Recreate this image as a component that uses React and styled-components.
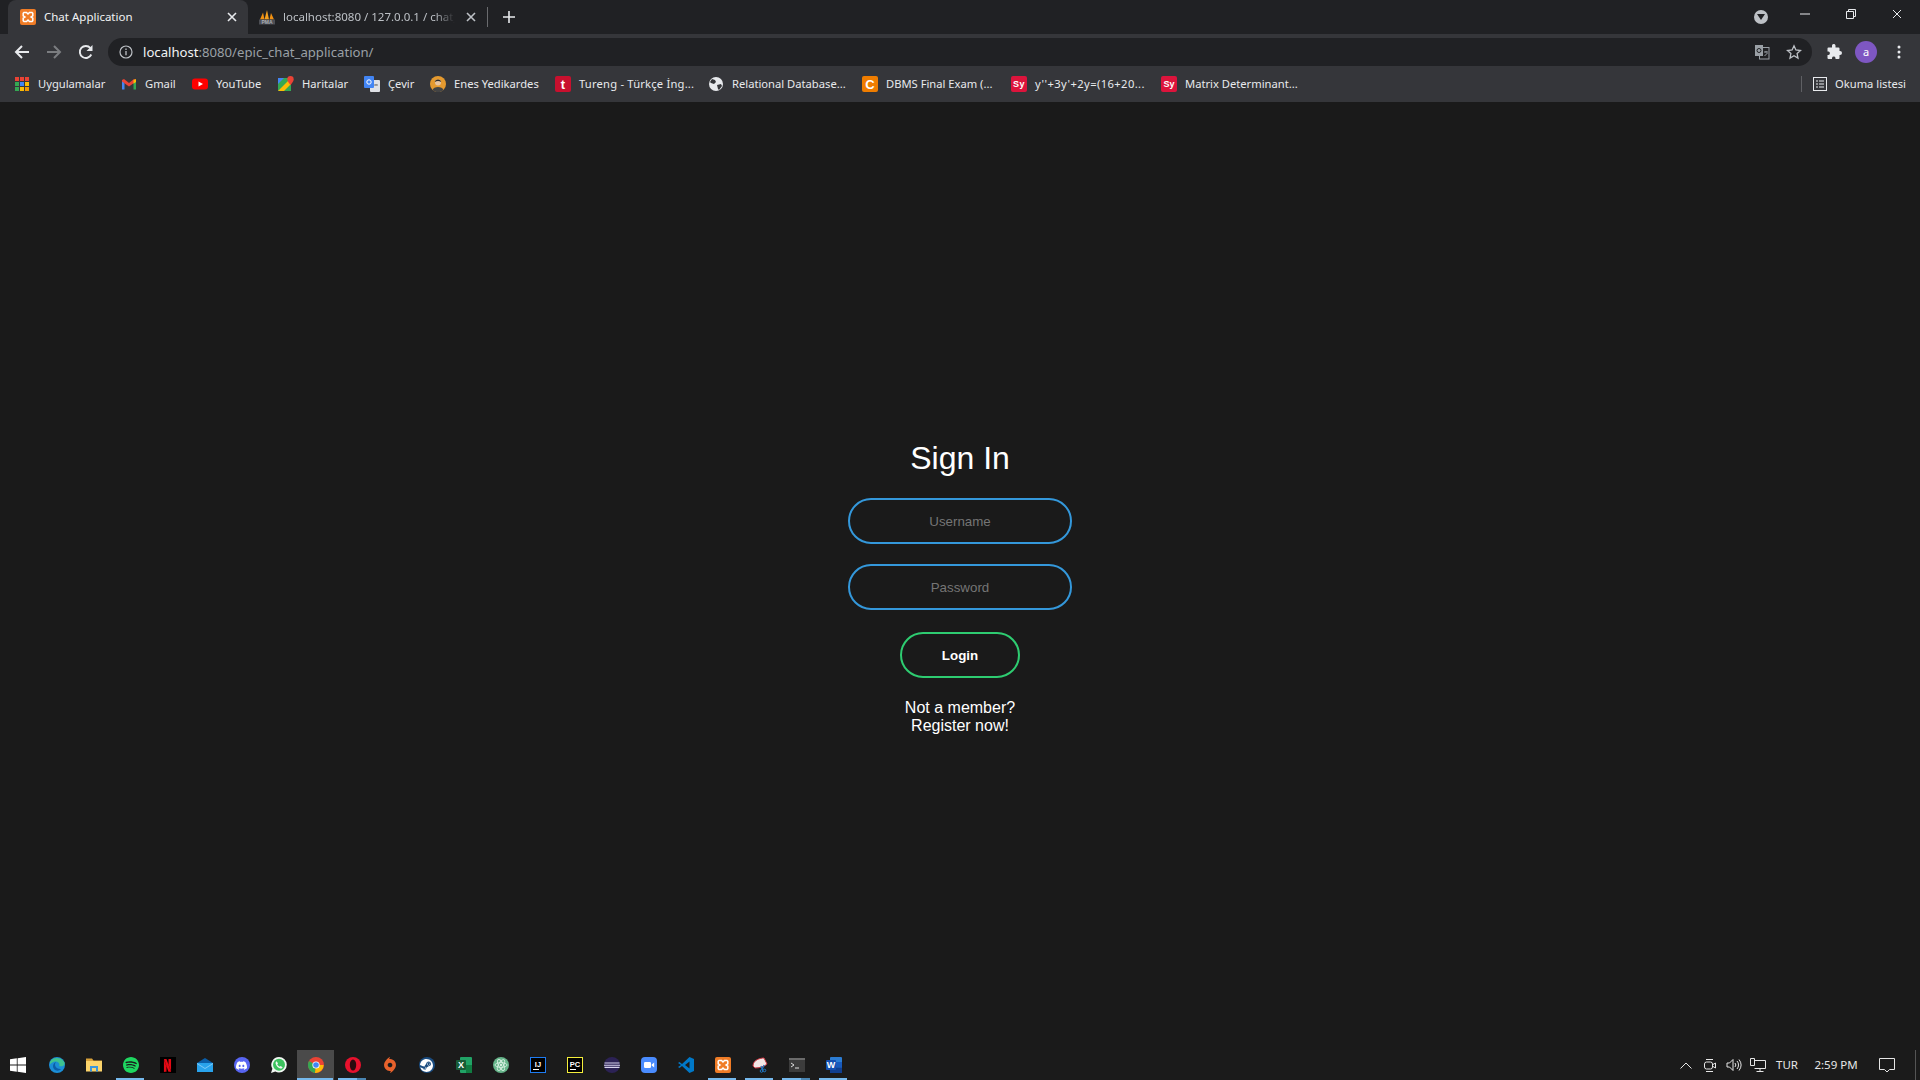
import React from "react";
import styled, { createGlobalStyle } from "styled-components";
import { SiSpotify, SiNetflix, SiDiscord, SiOrigin, SiSteam } from "react-icons/si";

const GlobalStyle = createGlobalStyle`
  html, body {
    margin: 0;
    height: 100%;
    overflow: hidden;
    background: #1a1a1a;
  }
  #root {
    height: 100%;
  }
  * {
    box-sizing: border-box;
  }
`;

const uiFont = `"Noto Sans", "Open Sans", sans-serif`;
const pageFont = `"Liberation Sans", Arial, sans-serif`;

const Screen = styled.div`
  height: 1080px;
  display: flex;
  flex-direction: column;
  font-family: ${uiFont};
`;

/* browser chrome */

const TabStrip = styled.div`
  height: 34px;
  flex: none;
  display: flex;
  align-items: stretch;
  padding-left: 8px;
  background: #202124;
`;

const Tab = styled.div`
  width: 240px;
  margin-right: -1px;
  display: flex;
  align-items: center;
  gap: 8px;
  padding: 0 8px 0 12px;
  border-radius: 8px 8px 0 0;
  color: ${(p) => (p.$active ? "#f1f3f4" : "#bdc1c6")};
  background: ${(p) => (p.$active ? "#35363a" : "transparent")};
`;

const TabTitle = styled.span`
  flex: 1;
  min-width: 0;
  padding-bottom: 2px;
  white-space: nowrap;
  overflow: hidden;
  font-size: 11.5px;
  mask-image: ${(p) => (p.$fade ? "linear-gradient(90deg, #000 88%, transparent)" : "none")};
`;

const TabClose = styled.div`
  width: 16px;
  height: 16px;
  flex: none;
  display: flex;
  align-items: center;
  justify-content: center;
`;

const TabDivider = styled.div`
  width: 1px;
  height: 20px;
  margin: 7px 0 0 1px;
  background: #6a6b6e;
`;

const NewTab = styled.div`
  width: 28px;
  margin-left: 7px;
  display: flex;
  align-items: center;
  justify-content: center;
`;

const WindowArea = styled.div`
  margin-left: auto;
  display: flex;
  align-items: flex-start;
`;

const ProfileDrop = styled.div`
  width: 14px;
  height: 14px;
  margin: 10px 14px 0 0;
  border-radius: 50%;
  background: #bdc1c6;
  display: flex;
  align-items: center;
  justify-content: center;
`;

const WindowButton = styled.div`
  width: 46px;
  height: 28px;
  display: flex;
  align-items: center;
  justify-content: center;
`;

const Toolbar = styled.div`
  height: 34px;
  flex: none;
  display: flex;
  align-items: center;
  padding: 2px 5px 0 6px;
  background: #35363a;
`;

const NavButton = styled.div`
  width: 32px;
  height: 32px;
  flex: none;
  display: flex;
  align-items: center;
  justify-content: center;
  margin-right: ${(p) => p.$mr || 0}px;
`;

const Omnibox = styled.div`
  flex: 1;
  height: 28px;
  margin: 0 6px;
  padding: 0 10px 0 11px;
  display: flex;
  align-items: center;
  border-radius: 14px;
  background: #202124;
`;

const UrlText = styled.div`
  margin-left: 10px;
  padding-bottom: 1px;
  font-size: 13.15px;
  color: #9aa0a6;
  b {
    font-weight: 400;
    color: #f1f3f4;
  }
`;

const OmniActions = styled.div`
  margin-left: auto;
  display: flex;
  align-items: center;
  gap: 16px;
`;

const Avatar = styled.div`
  width: 22px;
  height: 22px;
  padding-bottom: 1px;
  border-radius: 50%;
  background: #7e57c2;
  color: #fff;
  font-size: 11px;
  display: flex;
  align-items: center;
  justify-content: center;
`;

const BookmarkBar = styled.div`
  height: 34px;
  flex: none;
  display: flex;
  align-items: center;
  padding: 0 14px 2px 14px;
  background: #35363a;
`;

const Bookmark = styled.div`
  width: ${(p) => p.$w}px;
  flex: none;
  display: flex;
  align-items: center;
  gap: 8px;
  white-space: nowrap;
  font-size: 11.2px;
  letter-spacing: ${(p) => p.$ls || 0}px;
  color: #e8eaed;
  span {
    padding-bottom: 2px;
  }
`;

const ReadingList = styled.div`
  margin-left: auto;
  height: 16px;
  display: flex;
  align-items: center;
  gap: 8px;
  padding-left: 11px;
  border-left: 1px solid #5f6064;
  white-space: nowrap;
  font-size: 11.2px;
  color: #e8eaed;
  span {
    padding-bottom: 2px;
  }
`;

/* sign in page */

const Main = styled.main`
  flex: 1;
  padding-top: 22px;
  display: flex;
  align-items: center;
  justify-content: center;
  background: #1a1a1a;
`;

const Form = styled.form`
  width: 224px;
  display: flex;
  flex-direction: column;
  align-items: center;
  font-family: ${pageFont};
  color: #fff;
`;

const Title = styled.h1`
  margin: 0 0 21px;
  font-size: 32px;
  line-height: 37px;
  font-weight: 400;
`;

const Field = styled.input`
  width: 224px;
  height: 46px;
  margin-bottom: 20px;
  padding: 2px 2px 0;
  border: 2px solid #3498db;
  border-radius: 24px;
  outline: none;
  background: transparent;
  text-align: center;
  font-family: ${pageFont};
  font-size: 13.33px;
  color: #fff;
  &::placeholder {
    color: #757575;
    opacity: 1;
  }
`;

const LoginButton = styled.button`
  width: 120px;
  height: 46px;
  margin: 2px 0 21px;
  padding: 1px 0 0;
  border: 2px solid #2ecc71;
  border-radius: 24px;
  background: transparent;
  font-family: ${pageFont};
  font-size: 13.33px;
  font-weight: 700;
  color: #fff;
`;

const RegisterLink = styled.a`
  width: 120px;
  text-align: center;
  font-size: 16px;
  line-height: 18px;
  color: #fff;
`;

/* windows taskbar */

const Taskbar = styled.footer`
  height: 30px;
  flex: none;
  display: flex;
  align-items: stretch;
  background: #1b1b1b;
`;

const StartButton = styled.div`
  width: 38px;
  flex: none;
  padding-right: 2px;
  display: flex;
  align-items: center;
  justify-content: center;
`;

const TaskCell = styled.div`
  position: relative;
  width: 37px;
  flex: none;
  display: flex;
  align-items: center;
  justify-content: center;
  background: ${(p) => (p.$focused ? "#4a4a4a" : "transparent")};
  &::after {
    content: "";
    display: ${(p) => (p.$open ? "block" : "none")};
    position: absolute;
    bottom: 0;
    left: ${(p) => (p.$focused ? "0" : "4px")};
    right: ${(p) => (p.$focused ? "1px" : "5px")};
    height: 2px;
    background: ${(p) =>
      p.$stacked ? "linear-gradient(90deg, #76b9ed 68%, #4a86b3 68%)" : "#76b9ed"};
  }
`;

const Tray = styled.div`
  margin-left: auto;
  display: flex;
  align-items: center;
  font-family: "Noto Sans", sans-serif;
  font-size: 11.5px;
  color: #e6e6e6;
`;

const TraySlot = styled.div`
  width: ${(p) => p.$w}px;
  padding: 0 ${(p) => p.$pr || 0}px 2px 0;
  display: flex;
  align-items: center;
  justify-content: center;
  white-space: nowrap;
`;

const TrayIcon = styled(TraySlot)`
  padding-bottom: 0;
`;

const Desktop = styled.div`
  width: 1px;
  height: 30px;
  margin: 0 4px 0 12px;
  background: #555;
`;

const Round = styled.div`
  width: 16px;
  height: 16px;
  border-radius: 50%;
  background: ${(p) => p.$bg};
  color: ${(p) => p.$fg || "#fff"};
  display: flex;
  align-items: center;
  justify-content: center;
`;

const SquareBadge = styled(Round)`
  border-radius: 0;
`;

const Favicon = styled.div`
  width: 16px;
  height: 16px;
  flex: none;
  border-radius: 2px;
  background: ${(p) => p.$bg};
  color: #fff;
  font-size: ${(p) => p.$size || 11}px;
  font-weight: 700;
  font-family: ${pageFont};
  display: flex;
  align-items: center;
  justify-content: center;
`;

/* drawn icons */

const Xampp = () => (
  <svg width="16" height="16" viewBox="0 0 16 16">
    <rect width="16" height="16" rx="2" fill="#f07c26" />
    <path d="M4 3.500h2.500L8 5l1.500-1.500H12l.8.8v2.500L11 8l1.800 1.200v2.500l-.8.8H9.500L8 11l-1.500 1.500H4l-.8-.8V9.200L5 8 3.200 6.800V4.300z" fill="none" stroke="#fff" strokeWidth="1.500" />
  </svg>
);

const PhpMyAdmin = () => (
  <svg width="16" height="16" viewBox="0 0 16 16" fontFamily={pageFont}>
    <path d="M1 10.500 4 3.500l1.500 7z" fill="#f29111" />
    <path d="M5.500 10.500 8 1l2 9.500z" fill="#f6a01e" />
    <path d="M10.500 10.500 12 4l3 6.500z" fill="#f29111" />
    <rect x="0" y="10.500" width="16" height="5" fill="#4d4f55" />
    <text x="8" y="15" fontSize="5" fontWeight="700" fill="#a9adb5" textAnchor="middle">PMA</text>
  </svg>
);

const Close = ({ size = 10, color = "#e8eaed", width = 1.6 }) => (
  <svg width={size} height={size} viewBox="0 0 10 10">
    <path d="M1 1l8 8M9 1l-8 8" stroke={color} strokeWidth={width} />
  </svg>
);

const Arrow = ({ color, flip }) => (
  <svg width="16" height="16" viewBox="0 0 16 16" style={flip ? { transform: "scaleX(-1)" } : undefined}>
    <path d="M15 8H2M8 2 2 8l6 6" fill="none" stroke={color} strokeWidth="2" />
  </svg>
);

const Reload = () => (
  <svg width="16" height="16" viewBox="0 0 16 16">
    <path d="M13.300 10.500A6 6 0 1 1 12.400 4" fill="none" stroke="#e8eaed" strokeWidth="1.900" />
    <path d="M14.500 1v6h-6z" fill="#e8eaed" />
  </svg>
);

const Info = () => (
  <svg width="14" height="14" viewBox="0 0 14 14">
    <circle cx="7" cy="7" r="6" fill="none" stroke="#bdc1c6" strokeWidth="1.200" />
    <path d="M7 6v4.200M7 3.600v1.300" stroke="#bdc1c6" strokeWidth="1.300" />
  </svg>
);

const Translate = () => (
  <svg width="16" height="16" viewBox="0 0 16 16">
    <rect x="5.500" y="3.500" width="9.500" height="11.500" fill="none" stroke="#9aa0a6" />
    <rect x="1" y="1" width="8" height="11" fill="#9aa0a6" />
    <circle cx="5" cy="6.500" r="2" fill="none" stroke="#202124" />
    <path d="M10 8h4M12 7v1.500M10.500 12l3-3" stroke="#9aa0a6" />
  </svg>
);

const Star = () => (
  <svg width="16" height="16" viewBox="0 0 16 16">
    <path d="m8 1.800 1.900 4.200 4.600.5-3.400 3.100.9 4.500L8 11.800l-4 2.300.9-4.500L1.500 6.500l4.600-.5z" fill="none" stroke="#bdc1c6" strokeWidth="1.300" />
  </svg>
);

const Puzzle = () => (
  <svg width="16" height="16" viewBox="0 0 16 16">
    <path d="M6 1.500a1.800 1.800 0 0 1 3.500 0V3.500h3a1 1 0 0 1 1 1V7h.5a2 2 0 0 1 0 4h-.5v3a1 1 0 0 1-1 1H9.500v-1a1.800 1.800 0 0 0-3.500 0v1H2.500a1 1 0 0 1-1-1v-3H2.500a1.800 1.800 0 0 0 0-3.500h-1V4.500a1 1 0 0 1 1-1H6z" fill="#e8eaed" />
  </svg>
);

const Kebab = () => (
  <svg width="4" height="14" viewBox="0 0 4 14">
    <circle cx="2" cy="2" r="1.500" fill="#e8eaed" />
    <circle cx="2" cy="7" r="1.500" fill="#e8eaed" />
    <circle cx="2" cy="12" r="1.500" fill="#e8eaed" />
  </svg>
);

const AppsGrid = () => {
  const colors = ["#ea4335", "#ea4335", "#ea4335", "#34a853", "#4285f4", "#fbbc05", "#34a853", "#fbbc05", "#f29900"];
  return (
    <svg width="14" height="14" viewBox="0 0 14 14" style={{ margin: "0 1px" }}>
      {colors.map((c, i) => (
        <rect key={i} x={(i % 3) * 5} y={Math.floor(i / 3) * 5} width="4" height="4" fill={c} />
      ))}
    </svg>
  );
};

const Gmail = () => (
  <svg width="16" height="16" viewBox="0 0 16 16">
    <path d="M1 4v9.500h2.500V7z" fill="#4285f4" />
    <path d="M15 4v9.500h-2.500V7z" fill="#34a853" />
    <path d="M1 4l2-1 5 4 5-4 2 1v1.500L8 10.500 1 5.500z" fill="#ea4335" />
    <path d="M12.500 4 15 3v3l-2.500 1.700z" fill="#fbbc05" />
  </svg>
);

const YouTube = () => (
  <svg width="16" height="16" viewBox="0 0 16 16">
    <rect y="2.500" width="16" height="11" rx="3" fill="#f00" />
    <path d="M6.500 5.500v5L11 8z" fill="#fff" />
  </svg>
);

const Maps = () => (
  <svg width="16" height="16" viewBox="0 0 16 16">
    <rect y="2" width="13" height="13" fill="#34a853" />
    <path d="M0 15 13 2v6L6 15z" fill="#fbbc05" />
    <path d="M0 2h6L0 8z" fill="#4285f4" />
    <path d="M12.500 0a3.200 3.200 0 0 1 3.200 3.200C15.700 5.500 12.500 9 12.500 9S9.300 5.500 9.300 3.200A3.200 3.200 0 0 1 12.500 0z" fill="#ea4335" />
  </svg>
);

const GTranslate = () => (
  <svg width="16" height="16" viewBox="0 0 16 16">
    <rect x="6" y="4" width="10" height="12" rx="1" fill="#dfe1e5" />
    <rect width="10" height="12" rx="1" fill="#4285f4" />
    <circle cx="5" cy="6" r="2.200" fill="none" stroke="#fff" />
    <path d="M10 9h4M12 8v1.500" stroke="#777" />
  </svg>
);

const Portrait = () => (
  <svg width="16" height="16" viewBox="0 0 16 16">
    <circle cx="8" cy="8" r="8" fill="#e59a2f" />
    <circle cx="8" cy="6.500" r="3" fill="#e8c4a0" />
    <path d="M4.800 6C5 2.500 11 2.500 11.200 6 9 4.500 7 4.500 4.800 6z" fill="#2b2b2b" />
    <path d="M2.500 14c1-4 10-4 11 0a8 8 0 0 1-11 0z" fill="#444" />
  </svg>
);

const Globe = () => (
  <svg width="16" height="16" viewBox="0 0 16 16">
    <circle cx="8" cy="8" r="7" fill="#e8eaed" />
    <path d="M4 3l3 1 1 2-2 2-3-1-1-1zM9 9l4-1 1 2-3 4-1-1z" fill="#35363a" />
  </svg>
);

const WindowsLogo = () => (
  <svg width="16" height="16" viewBox="0 0 16 16">
    <path d="M0 2.300 6.800 1.300v6.300H0zM7.600 1.200 16 0v7.600H7.600zM0 8.400h6.800v6.300L0 13.700zM7.600 8.400H16V16l-8.400-1.200z" fill="#fff" />
  </svg>
);

const Edge = () => (
  <svg width="16" height="16" viewBox="0 0 16 16">
    <circle cx="8" cy="8" r="8" fill="#1b8ed6" />
    <path d="M1 5C3 0 12-1 15.500 5.500 16.500 9 12 10 10 9c1.500-2-1-5-4-4.500C3.500 5 2 6 1 7.500z" fill="#3ec28f" />
    <path d="M6 13c-3-2-2.500-7 1-8C4.500 8 7 12.500 12 12c-1.500 2-4 2-6 1z" fill="#0c5ea8" />
  </svg>
);

const Folder = () => (
  <svg width="16" height="16" viewBox="0 0 16 16">
    <path d="M0 1.500h6l1.500 2H16V5H0z" fill="#d9a23a" />
    <rect y="4" width="16" height="10.500" fill="#fcd46b" />
    <path d="M4 14.500V9h8v5.500H10V11H6v3.500z" fill="#3a96dd" />
  </svg>
);

const Mail = () => (
  <svg width="16" height="16" viewBox="0 0 16 16">
    <path d="M0 6 8 1l8 5z" fill="#0a5ea8" />
    <rect y="6" width="16" height="9" fill="#29a3ec" />
    <path d="M0 6l8 5 8-5v1l-8 5-8-5z" fill="#7fcaf6" />
  </svg>
);

const WhatsApp = () => (
  <svg width="16" height="16" viewBox="0 0 16 16">
    <path d="M8 0a7.800 7.800 0 0 1 0 15.600c-1.300 0-2.600-.3-3.700-1L0 16l1.400-4.200A7.800 7.800 0 0 1 8 0z" fill="#f2f7f3" />
    <circle cx="8" cy="7.800" r="6" fill="#3cc35e" />
    <path d="M5.700 4.200c-.9.400-1.300 1.400-1 2.500.6 2.200 2.300 4 4.500 4.700 1.100.3 2.100-.2 2.400-1.200l-2-1.200-.9.800C7.600 9.300 6.800 8.500 6.200 7.500l.8-.9z" fill="#f2f7f3" />
  </svg>
);

const Chrome = () => (
  <svg width="16" height="16" viewBox="0 0 16 16">
    <circle cx="8" cy="8" r="8" fill="#ea4335" />
    <path d="M8 8 1 4a8 8 0 0 0 6 11.900z" fill="#34a853" />
    <path d="M8 8h7.700A8 8 0 0 1 7 15.900z" fill="#fbbc05" />
    <circle cx="8" cy="8" r="3.600" fill="#fff" />
    <circle cx="8" cy="8" r="2.800" fill="#4285f4" />
  </svg>
);

const Opera = () => (
  <svg width="16" height="16" viewBox="0 0 16 16">
    <circle cx="8" cy="8" r="8" fill="#e8112d" />
    <ellipse cx="8" cy="8" rx="3.200" ry="5.600" fill="#2a0a0e" />
  </svg>
);

const Excel = () => (
  <svg width="16" height="16" viewBox="0 0 16 16" fontFamily={pageFont}>
    <rect x="4" width="12" height="16" rx="1" fill="#21a366" />
    <rect x="10" y="8" width="6" height="8" fill="#107c41" />
    <rect y="3" width="10" height="10" rx="1" fill="#185c37" />
    <text x="5" y="11" fontSize="9" fontWeight="700" fill="#fff" textAnchor="middle">X</text>
  </svg>
);

const AtomApp = () => (
  <svg width="16" height="16" viewBox="0 0 16 16">
    <circle cx="8" cy="8" r="8" fill="#66b58a" />
    <g fill="none" stroke="#d5efe0" strokeWidth=".9">
      <ellipse cx="8" cy="8" rx="6" ry="2.400" />
      <ellipse cx="8" cy="8" rx="6" ry="2.400" transform="rotate(60 8 8)" />
      <ellipse cx="8" cy="8" rx="6" ry="2.400" transform="rotate(120 8 8)" />
    </g>
    <circle cx="8" cy="8" r="1.200" fill="#d5efe0" />
  </svg>
);

const IdeBox = ({ label, color }) => (
  <svg width="16" height="16" viewBox="0 0 16 16" fontFamily={pageFont}>
    <rect x=".5" y=".5" width="15" height="15" fill="#000" stroke={color} />
    <text x="8" y="9.500" fontSize="7.500" fontWeight="700" fill="#fff" textAnchor="middle">{label}</text>
    <rect x="3" y="12" width="6" height="1" fill="#fff" />
  </svg>
);

const Eclipse = () => (
  <svg width="16" height="16" viewBox="0 0 16 16">
    <circle cx="8" cy="8" r="8" fill="#2c2255" />
    <path d="M.5 6h15M0 8.200h16M.5 10.400h15" stroke="#d8d4ee" strokeWidth="1.100" />
  </svg>
);

const ZoomApp = () => (
  <svg width="16" height="16" viewBox="0 0 16 16">
    <rect width="16" height="16" rx="4" fill="#4a8cff" />
    <rect x="3" y="5" width="7" height="6" rx="1.300" fill="#fff" />
    <path d="m10.700 7.500 2.500-2v5l-2.500-2z" fill="#fff" />
  </svg>
);

const VSCode = () => (
  <svg width="16" height="16" viewBox="0 0 16 16">
    <path d="M11.500 0 16 2v12l-4.500 2L4 9l-2.500 2L0 10l3-2-3-2 1.500-1L4 7z" fill="#0078c8" />
    <path d="M11.500 4.500v7L7 8z" fill="#1b1b1b" />
  </svg>
);

const Snip = () => (
  <svg width="16" height="16" viewBox="0 0 16 16">
    <path d="M1 9C1 3 8 1 12 1l3 6c-3 3-8 4-12 4z" fill="#f3e6e6" stroke="#c9343f" />
    <path d="M9 9l1.500 4M12 8l-2 5" stroke="#2079c7" strokeWidth="1.200" />
    <circle cx="9.500" cy="14" r="1.300" fill="none" stroke="#2079c7" />
    <circle cx="12.500" cy="13.500" r="1.300" fill="none" stroke="#2079c7" />
  </svg>
);

const Terminal = () => (
  <svg width="16" height="14" viewBox="0 0 16 14">
    <rect width="16" height="14" fill="#3c3c3c" />
    <rect width="16" height="2" fill="#6b6b6b" />
    <path d="m2 5 3 2-3 2" fill="none" stroke="#ddd" />
    <path d="M6 10h4" stroke="#ddd" />
  </svg>
);

const Word = () => (
  <svg width="16" height="16" viewBox="0 0 16 16" fontFamily={pageFont}>
    <rect x="4" width="12" height="16" rx="1" fill="#2b7cd3" />
    <rect x="4" y="5" width="12" height="5.500" fill="#185abd" />
    <rect x="4" y="10.500" width="12" height="5.500" fill="#103f91" />
    <rect y="3" width="10" height="10" rx="1" fill="#144fb0" />
    <text x="5" y="11" fontSize="9" fontWeight="700" fill="#fff" textAnchor="middle">W</text>
  </svg>
);

const Brand = ({ icon: Icon, color, bg, size = 16 }) =>
  bg ? (
    <Round $bg={bg} $fg={color}>
      <Icon size={size} />
    </Round>
  ) : (
    <Icon size={size} color={color} />
  );

const BOOKMARKS = [
  { w: 107, label: "Uygulamalar", icon: <AppsGrid /> },
  { w: 71, label: "Gmail", icon: <Gmail /> },
  { w: 86, label: "YouTube", icon: <YouTube /> },
  { w: 86, label: "Haritalar", icon: <Maps /> },
  { w: 66, label: "Çevir", icon: <GTranslate /> },
  { w: 125, label: "Enes Yedikardes", icon: <Portrait /> },
  { w: 153, ls: 0.2, label: "Tureng - Türkçe İng...", icon: <Favicon $bg="#c8102e" $size={13}>t</Favicon> },
  { w: 154, label: "Relational Database...", icon: <Globe /> },
  { w: 149, label: "DBMS Final Exam (...", icon: <Favicon $bg="#ef7d00" $size={13}>C</Favicon> },
  { w: 150, ls: 0.4, label: "y''+3y'+2y=(16+20...", icon: <Favicon $bg="#dc143c" $size={9}>Sy</Favicon> },
  { w: 140, label: "Matrix Determinant...", icon: <Favicon $bg="#dc143c" $size={9}>Sy</Favicon> },
];

const TASK_APPS = [
  { id: "edge", icon: <Edge /> },
  { id: "files", icon: <Folder /> },
  { id: "spotify", icon: <Brand icon={SiSpotify} color="#1ed760" />, open: true },
  { id: "netflix", icon: <SquareBadge $bg="#000" $fg="#e50914"><SiNetflix size={13} /></SquareBadge> },
  { id: "mail", icon: <Mail /> },
  { id: "discord", icon: <Brand icon={SiDiscord} color="#fff" bg="#5865f2" size={11} /> },
  { id: "whatsapp", icon: <WhatsApp /> },
  { id: "chrome", icon: <Chrome />, open: true, focused: true },
  { id: "opera", icon: <Opera />, open: true, stacked: true },
  { id: "origin", icon: <Brand icon={SiOrigin} color="#e8622c" /> },
  { id: "steam", icon: <Brand icon={SiSteam} color="#fff" bg="#1a4c80" size={13} /> },
  { id: "excel", icon: <Excel /> },
  { id: "atom", icon: <AtomApp /> },
  { id: "idea", icon: <IdeBox label="IJ" color="#1f7cf2" /> },
  { id: "pycharm", icon: <IdeBox label="PC" color="#f5ee3b" /> },
  { id: "eclipse", icon: <Eclipse /> },
  { id: "zoom", icon: <ZoomApp /> },
  { id: "vscode", icon: <VSCode /> },
  { id: "xampp", icon: <Xampp />, open: true },
  { id: "snip", icon: <Snip />, open: true },
  { id: "terminal", icon: <Terminal />, open: true, stacked: true },
  { id: "word", icon: <Word />, open: true },
];

function App() {
  return (
    <Screen>
      <GlobalStyle />
      <TabStrip>
        <Tab $active>
          <Xampp />
          <TabTitle>Chat Application</TabTitle>
          <TabClose><Close /></TabClose>
        </Tab>
        <Tab>
          <PhpMyAdmin />
          <TabTitle $fade>localhost:8080 / 127.0.0.1 / chat_</TabTitle>
          <TabClose><Close color="#bdc1c6" /></TabClose>
        </Tab>
        <TabDivider />
        <NewTab>
          <svg width="12" height="12" viewBox="0 0 12 12">
            <path d="M6 0v12M0 6h12" stroke="#e8eaed" strokeWidth="1.600" />
          </svg>
        </NewTab>
        <WindowArea>
          <ProfileDrop>
            <svg width="8" height="6" viewBox="0 0 8 6"><path d="M0 0h8L4 6z" fill="#202124" /></svg>
          </ProfileDrop>
          <WindowButton>
            <svg width="10" height="2" viewBox="0 0 10 2"><path d="M0 1h10" stroke="#e8eaed" /></svg>
          </WindowButton>
          <WindowButton>
            <svg width="10" height="10" viewBox="0 0 10 10">
              <path d="M.5 2.500h7v7h-7zM2.500 2.500v-2h7v7h-2" fill="none" stroke="#e8eaed" />
            </svg>
          </WindowButton>
          <WindowButton>
            <Close width={1} />
          </WindowButton>
        </WindowArea>
      </TabStrip>

      <Toolbar>
        <NavButton><Arrow color="#e8eaed" /></NavButton>
        <NavButton><Arrow color="#7b7d80" flip /></NavButton>
        <NavButton><Reload /></NavButton>
        <Omnibox>
          <Info />
          <UrlText><b>localhost</b>:8080/epic_chat_application/</UrlText>
          <OmniActions>
            <Translate />
            <Star />
          </OmniActions>
        </Omnibox>
        <NavButton><Puzzle /></NavButton>
        <NavButton $mr={1}><Avatar>a</Avatar></NavButton>
        <NavButton><Kebab /></NavButton>
      </Toolbar>

      <BookmarkBar>
        {BOOKMARKS.map((b) => (
          <Bookmark key={b.label} $w={b.w} $ls={b.ls}>
            {b.icon}
            <span>{b.label}</span>
          </Bookmark>
        ))}
        <ReadingList>
          <svg width="14" height="14" viewBox="0 0 14 14">
            <rect x=".5" y=".5" width="13" height="13" fill="none" stroke="#e8eaed" />
            <path d="M3 4h2M6 4h5M3 7h2M6 7h5M3 10h2M6 10h5" stroke="#e8eaed" strokeWidth="1.200" />
          </svg>
          <span>Okuma listesi</span>
        </ReadingList>
      </BookmarkBar>

      <Main>
        <Form onSubmit={(e) => e.preventDefault()}>
          <Title>Sign In</Title>
          <Field type="text" placeholder="Username" />
          <Field type="password" placeholder="Password" />
          <LoginButton type="submit">Login</LoginButton>
          <RegisterLink>Not a member? Register now!</RegisterLink>
        </Form>
      </Main>

      <Taskbar>
        <StartButton><WindowsLogo /></StartButton>
        {TASK_APPS.map((a) => (
          <TaskCell key={a.id} $open={a.open} $focused={a.focused} $stacked={a.stacked}>
            {a.icon}
          </TaskCell>
        ))}
        <Tray>
          <TrayIcon $w={24}>
            <svg width="12" height="7" viewBox="0 0 12 7"><path d="m.5 6.500 5.500-5.500 5.500 5.500" fill="none" stroke="#e6e6e6" /></svg>
          </TrayIcon>
          <TrayIcon $w={24}>
            <svg width="12" height="15" viewBox="0 0 12 15">
              <path d="M2 1.500h7M2 13.500h7" stroke="#e6e6e6" />
              <rect x=".5" y="4" width="8" height="7" rx="2" fill="none" stroke="#e6e6e6" />
              <path d="m9 6.500 2.500-1.500v5L9 8.500" fill="none" stroke="#e6e6e6" />
            </svg>
          </TrayIcon>
          <TrayIcon $w={24}>
            <svg width="16" height="14" viewBox="0 0 16 14">
              <path d="M1 5h2.500L7 1.500v11L3.500 9H1z" fill="none" stroke="#e6e6e6" />
              <path d="M9 5a3 3 0 0 1 0 4M11 3a6 6 0 0 1 0 8M13 1.500a9 9 0 0 1 0 11" fill="none" stroke="#e6e6e6" />
            </svg>
          </TrayIcon>
          <TrayIcon $w={24}>
            <svg width="16" height="14" viewBox="0 0 16 14">
              <path d="M4.500 2.500h11v8h-11M.5.500h4v7h-4zM10 10.500v3M6.500 13.500h7" fill="none" stroke="#e6e6e6" />
            </svg>
          </TrayIcon>
          <TraySlot $w={34}>TUR</TraySlot>
          <TraySlot $w={67} $pr={3}>2:59 PM</TraySlot>
          <TrayIcon $w={32}>
            <svg width="16" height="15" viewBox="0 0 16 15">
              <path d="M.5.500h15v11h-5L8 14l-2.500-2.500h-5z" fill="none" stroke="#e6e6e6" />
            </svg>
          </TrayIcon>
          <Desktop />
        </Tray>
      </Taskbar>
    </Screen>
  );
}

export default App;
